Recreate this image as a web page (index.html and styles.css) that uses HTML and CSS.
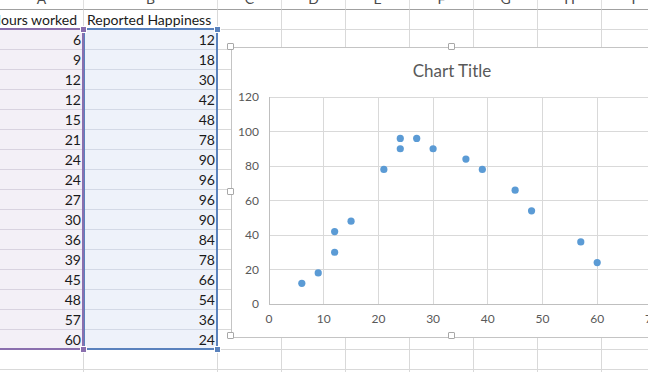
FILE: index.html
```html
<!DOCTYPE html>
<html lang="en">
<head>
    <meta charset="UTF-8">
    <title>Hours worked vs Reported Happiness</title>
    <link rel="stylesheet" href="styles.css">
</head>
<body>

<div class="sheet" id="sheet">
    <div class="range range-b"></div>
    <div class="range range-a"></div>
    <div class="handle handle-a" style="left:80px; top:36px"></div>
    <div class="handle handle-a" style="left:80px; top:356px"></div>
    <div class="handle handle-b" style="left:214px; top:36px"></div>
    <div class="handle handle-b" style="left:214px; top:356px"></div>
</div>

<div class="chart">
    <svg id="plot" width="440" height="289" xmlns="http://www.w3.org/2000/svg"></svg>
    <div class="chart-handle" style="left:-5px; top:-5px"></div>
    <div class="chart-handle" style="left:216px; top:-5px"></div>
    <div class="chart-handle" style="left:-5px; top:140px"></div>
    <div class="chart-handle" style="left:-5px; top:284px"></div>
    <div class="chart-handle" style="left:216px; top:284px"></div>
</div>

<script>
    const data = [
        [6, 12], [9, 18], [12, 30], [12, 42], [15, 48], [21, 78], [24, 90], [24, 96],
        [27, 96], [30, 90], [36, 84], [39, 78], [45, 66], [48, 54], [57, 36], [60, 24]
    ];
    const letters = ['A', 'B', 'C', 'D', 'E', 'F', 'G', 'H', 'I'];

    function cell(text, cls) {
        const div = document.createElement('div');
        div.className = 'cell ' + (cls || '');
        if (text !== '') {
            const span = document.createElement('span');
            span.textContent = text;
            div.appendChild(span);
        }
        return div;
    }

    function buildSheet() {
        const sheet = document.getElementById('sheet');
        letters.forEach(l => sheet.appendChild(cell(l, 'col-head')));

        for (let r = 0; r < 19; r++) {
            if (r === 0) {
                sheet.appendChild(cell('Hours worked', 'clip'));
                sheet.appendChild(cell('Reported Happiness', 'title'));
            } else if (r <= data.length) {
                sheet.appendChild(cell(String(data[r - 1][0]), 'num fill-a'));
                sheet.appendChild(cell(String(data[r - 1][1]), 'num fill-b'));
            } else {
                sheet.appendChild(cell(''));
                sheet.appendChild(cell(''));
            }
            for (let c = 2; c < letters.length; c++) {
                sheet.appendChild(cell(''));
            }
        }
    }

    // plot area: x 0..70, y 0..120
    const px = x => 37 + x * 5.47;
    const py = y => 256 - y * 1.725;

    function svgEl(name, attrs, text) {
        const el = document.createElementNS('http://www.w3.org/2000/svg', name);
        for (const k in attrs) el.setAttribute(k, attrs[k]);
        if (text) el.textContent = text;
        return el;
    }

    function buildChart() {
        const svg = document.getElementById('plot');
        svg.appendChild(svgEl('text', { x: 220, y: 29, 'class': 'chart-title', 'text-anchor': 'middle' }, 'Chart Title'));

        for (let v = 0; v <= 120; v += 20) {
            svg.appendChild(svgEl('line', { x1: px(0), x2: px(70), y1: py(v), y2: py(v), 'class': v === 0 ? 'axis' : 'grid' }));
            svg.appendChild(svgEl('text', { x: 27, y: py(v) + 4, 'class': 'tick', 'text-anchor': 'end' }, String(v)));
        }
        for (let x = 0; x <= 70; x += 10) {
            svg.appendChild(svgEl('line', { x1: px(x), x2: px(x), y1: py(0), y2: py(120), 'class': x === 0 ? 'axis' : 'grid' }));
            svg.appendChild(svgEl('text', { x: px(x), y: 275, 'class': 'tick', 'text-anchor': 'middle' }, String(x)));
        }
        data.forEach(d => {
            svg.appendChild(svgEl('circle', { cx: px(d[0]), cy: py(d[1]), r: 3.6, 'class': 'marker' }));
        });
    }

    buildSheet();
    buildChart();
</script>

</body>
</html>
```

FILE: styles.css
```css
body {
    margin: 0;
    overflow: hidden;
    background-color: #fff;
    font-family: Lato, "Liberation Sans", sans-serif;
}
.sheet {
    position: relative;
    display: grid;
    grid-template-columns: 84px 134px repeat(7, 64px);
    grid-auto-rows: 20px;
    margin-top: -10px;
    font-size: 14px;
    color: #1a1a1a;
}
.cell {
    display: flex;
    align-items: flex-end;
    box-sizing: border-box;
    padding: 0 2px 1px 2px;
    border-right: 1px solid #d9d9d9;
    border-bottom: 1px solid #d9d9d9;
    white-space: nowrap;
    overflow: hidden;
    line-height: 16px;
}
.col-head {
    align-items: center;
    justify-content: center;
    color: #4a4a4a;
    font-size: 14px;
    border-bottom-color: #a0a0a0;
    border-right-color: #e0e0e0;
}
.clip {
    justify-content: flex-end;
    padding-right: 6px;
}
.title {
    padding-left: 3px;
}
.num {
    justify-content: flex-end;
}
.fill-a {
    background-color: #f3f0f7;
    border-color: #d8d3e0;
}
.fill-b {
    background-color: #eef2fa;
    border-color: #d3d9e6;
}
.range {
    position: absolute;
    top: 38px;
    height: 322px;
    box-sizing: border-box;
    border: 2px solid;
    z-index: 2;
}
.range-a {
    left: -2px;
    width: 86px;
    border-color: #8a6fae;
}
.range-b {
    left: 83px;
    width: 135px;
    border-color: #5a82bd;
}
.handle {
    position: absolute;
    width: 5px;
    height: 5px;
    border: 1px solid #fff;
    z-index: 3;
}
.handle-a {
    background-color: #8a6fae;
}
.handle-b {
    background-color: #5a82bd;
}
.chart {
    position: absolute;
    left: 231px;
    top: 47px;
    width: 442px;
    height: 291px;
    box-sizing: border-box;
    background-color: #fff;
    border: 1px solid #c4c4c4;
    z-index: 5;
}
.chart svg {
    display: block;
}
.chart-handle {
    position: absolute;
    width: 7px;
    height: 7px;
    box-sizing: border-box;
    background-color: #fff;
    border: 1px solid #a8a8a8;
    border-radius: 1px;
}
.chart-title {
    font-size: 17px;
    fill: #595959;
}
.tick {
    font-size: 12px;
    fill: #595959;
}
.grid {
    stroke: #d9d9d9;
    stroke-width: 1;
    shape-rendering: crispEdges;
}
.axis {
    stroke: #bfbfbf;
    stroke-width: 1;
    shape-rendering: crispEdges;
}
.marker {
    fill: #5b9bd5;
}
```
